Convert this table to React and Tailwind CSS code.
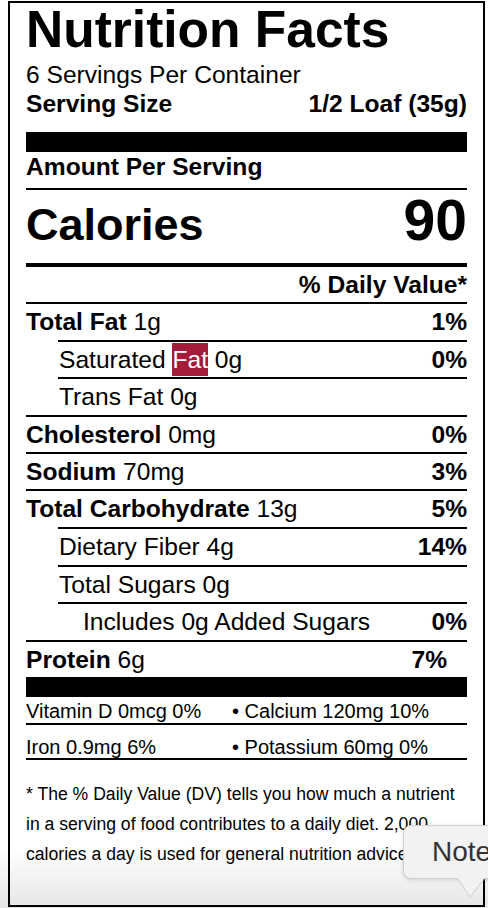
export default function App() {
  return (
    <div className="relative h-[908px] w-[488px] overflow-hidden bg-white font-['Liberation_Sans',Arial,sans-serif] text-black">
      <div className="ml-[8px] mt-px h-[906px] w-[477px] overflow-hidden border-2 border-black px-4">
        <div className="h-[52px] text-[51.5px] font-bold leading-[52px]">Nutrition Facts</div>
        <div className="mt-[7px] h-[29px] text-[24.6px] leading-[26px]">6 Servings Per Container</div>
        <div className="flex h-[26px] justify-between text-[24.6px] font-bold leading-[26px]">
          <span>Serving Size</span>
          <span>1/2 Loaf (35g)</span>
        </div>
        <div className="mt-[15px] h-[20px] bg-black" />
        <div className="h-[36px] text-[24.6px] font-bold leading-[30px]">Amount Per Serving</div>
        <div className="flex h-[75px] items-baseline justify-between border-t-2 border-black pt-[2px] font-bold">
          <span className="text-[45px] leading-none">Calories</span>
          <span className="text-[57px] leading-none">90</span>
        </div>
        <div className="flex h-[39px] items-center justify-end border-t-4 border-black text-[24.6px] font-bold leading-[28px]">
          % Daily Value*
        </div>

        <Row h="h-[38px]" label="Total Fat" amount="1g" dv="1%" />
        <Row h="h-[37px]" indent dv="0%">
          <span>
            Saturated <span className="bg-[#a51c3a] py-[3px] text-white">Fat</span> 0g
          </span>
        </Row>
        <Row h="h-[38px]" indent>
          <span>Trans Fat 0g</span>
        </Row>
        <Row h="h-[37px]" label="Cholesterol" amount="0mg" dv="0%" />
        <Row h="h-[37px]" label="Sodium" amount="70mg" dv="3%" />
        <Row h="h-[38px]" label="Total Carbohydrate" amount="13g" dv="5%" />
        <Row h="h-[38px]" indent dv="14%">
          <span>Dietary Fiber 4g</span>
        </Row>
        <Row h="h-[37px]" indent>
          <span>Total Sugars 0g</span>
        </Row>
        <Row h="h-[38px]" indent dv="0%">
          <span className="pl-6">Includes 0g Added Sugars</span>
        </Row>
        <div className="flex h-[37px] items-center justify-between border-t-2 border-black pr-5 text-[24.6px] leading-[28px]">
          <span>
            <span className="font-bold">Protein</span> 6g
          </span>
          <span className="font-bold">7%</span>
        </div>
        <div className="h-[20px] bg-black" />
        <div className="grid h-[26px] grid-cols-[206px_1fr] pt-[3px] text-[20px] leading-[22px]">
          <span>Vitamin D 0mcg 0%</span>
          <span>• Calcium 120mg 10%</span>
        </div>
        <div className="grid h-[35px] grid-cols-[206px_1fr] border-t-2 border-black pt-[11px] text-[20px] leading-[22px]">
          <span>Iron 0.9mg 6%</span>
          <span>• Potassium 60mg 0%</span>
        </div>
        <div className="border-t-2 border-black pt-[19px] text-[17.6px] leading-[30px]">
          * The % Daily Value (DV) tells you how much a nutrient
          <br />
          in a serving of food contributes to a daily diet. 2,000
          <br />
          calories a day is used for general nutrition advice.
        </div>
      </div>

      <div className="pointer-events-none absolute bottom-0 left-0 right-0 h-[60px] bg-linear-to-b from-transparent to-black/10" />

      <div className="absolute left-[403px] top-[825px] h-[54px] w-[110px] rounded-lg border border-[#cfcfcf] bg-[#f2f2f2] shadow-[0_1px_4px_rgba(0,0,0,0.15)]">
        <span className="absolute left-[28px] top-[9px] text-[28px] leading-[34px] text-[#333]">Note</span>
      </div>
      <svg className="absolute left-[456px] top-[877px]" width="30" height="22" viewBox="0 0 30 22">
        <polygon points="1,0 29,0 14,20" fill="#f2f2f2" />
        <polyline points="1,1 14,20 29,1" fill="none" stroke="#cfcfcf" strokeWidth="1" />
      </svg>
    </div>
  );
}

function Row({ h, label, amount, dv, indent, children }) {
  return (
    <div
      className={`flex items-center justify-between border-t-2 border-black text-[24.6px] leading-[28px] ${h} ${
        indent ? "ml-8 pl-px" : ""
      }`}
    >
      {children ? (
        children
      ) : (
        <span>
          <span className="font-bold">{label}</span> {amount}
        </span>
      )}
      {dv ? <span className="font-bold">{dv}</span> : null}
    </div>
  );
}
